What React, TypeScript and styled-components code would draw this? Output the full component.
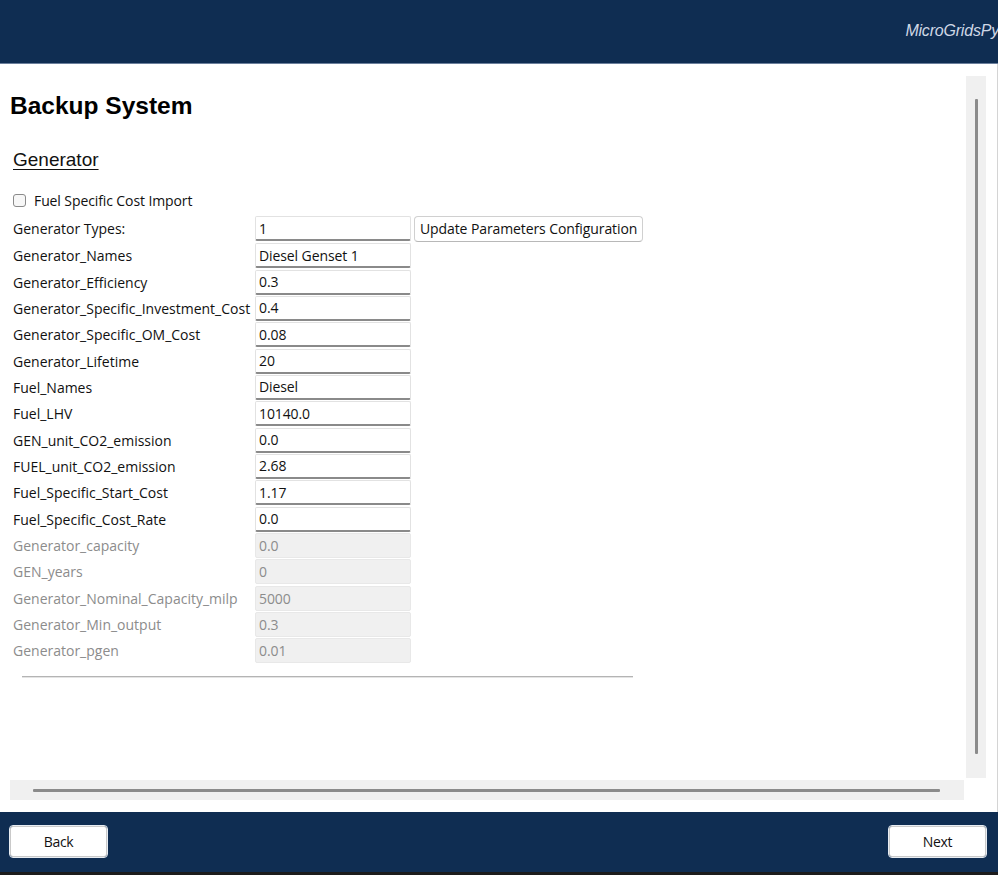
import React from 'react';
import styled, { createGlobalStyle } from 'styled-components';

const GlobalStyle = createGlobalStyle`
  html, body {
    margin: 0;
    padding: 0;
    background: #ffffff;
  }
  * {
    box-sizing: border-box;
  }
`;

const NAVY = '#0f2d52';
const UI_FONT = `"Open Sans", "Noto Sans", sans-serif`;

interface IField {
  label: string;
  value: string;
  disabled?: boolean;
}

const fields: IField[] = [
  { label: 'Generator_Names', value: 'Diesel Genset 1' },
  { label: 'Generator_Efficiency', value: '0.3' },
  { label: 'Generator_Specific_Investment_Cost', value: '0.4' },
  { label: 'Generator_Specific_OM_Cost', value: '0.08' },
  { label: 'Generator_Lifetime', value: '20' },
  { label: 'Fuel_Names', value: 'Diesel' },
  { label: 'Fuel_LHV', value: '10140.0' },
  { label: 'GEN_unit_CO2_emission', value: '0.0' },
  { label: 'FUEL_unit_CO2_emission', value: '2.68' },
  { label: 'Fuel_Specific_Start_Cost', value: '1.17' },
  { label: 'Fuel_Specific_Cost_Rate', value: '0.0' },
  { label: 'Generator_capacity', value: '0.0', disabled: true },
  { label: 'GEN_years', value: '0', disabled: true },
  { label: 'Generator_Nominal_Capacity_milp', value: '5000', disabled: true },
  { label: 'Generator_Min_output', value: '0.3', disabled: true },
  { label: 'Generator_pgen', value: '0.01', disabled: true },
];

const Frame = styled.div`
  width: 998px;
  height: 875px;
  display: flex;
  flex-direction: column;
  overflow: hidden;
`;

const Header = styled.header`
  height: 64px;
  background: ${NAVY};
  border-bottom: 1px solid #6b7f9c;
  display: flex;
  align-items: center;
  justify-content: flex-end;
`;

const Brand = styled.span`
  font-family: "Liberation Sans", Arial, sans-serif;
  font-style: italic;
  font-size: 16px;
  color: #cfd8e6;
  white-space: nowrap;
  margin-right: -1px;
  margin-top: -2px;
  letter-spacing: -0.2px;
`;

const Main = styled.main`
  flex: 1;
  background: #ffffff;
  border-right: 1px solid #d4d4d4;
  padding: 12px 11px 12px 10px;
  display: grid;
  grid-template-columns: 1fr 20px;
  grid-template-rows: 1fr 20px;
  gap: 2px;
  min-height: 0;
`;

const Viewport = styled.div`
  overflow: hidden;
  min-height: 0;
`;

const Track = styled.div<{ vertical?: boolean }>`
  background: #f0f0f0;
  display: flex;
  justify-content: center;
  align-items: center;
  padding: ${p => (p.vertical ? '23px 0 24px' : '0 24px 0 23px')};
`;

const Thumb = styled.div<{ vertical?: boolean }>`
  background: #8b8b8b;
  border-radius: 1px;
  width: ${p => (p.vertical ? '3px' : '100%')};
  height: ${p => (p.vertical ? '100%' : '3px')};
`;

const Title = styled.h1`
  margin: 16px 0 0;
  font-family: "Liberation Sans", Arial, sans-serif;
  font-weight: bold;
  font-size: 24.5px;
  line-height: 28px;
  color: #000000;
`;

const Section = styled.h2`
  margin: 29px 0 0 3px;
  font-family: "Liberation Sans", Arial, sans-serif;
  font-weight: normal;
  font-size: 19px;
  line-height: 22px;
  color: #111111;
  text-decoration: underline;
  text-underline-offset: 3px;
  text-decoration-thickness: 1px;
`;

const CheckRow = styled.label`
  margin: 21px 0 0 3px;
  height: 16px;
  display: flex;
  align-items: center;
  gap: 8px;
  font-family: ${UI_FONT};
  font-size: 14px;
  letter-spacing: -0.1px;
  color: #111111;
`;

const CheckBox = styled.span`
  width: 13px;
  height: 13px;
  border: 1px solid #8a8a8a;
  border-radius: 3px;
  background: #f7f7f7;
`;

const Form = styled.div`
  margin: 7px 0 0 3px;
  display: grid;
  grid-template-columns: 242px 156px auto;
  grid-auto-rows: 25px;
  grid-template-rows: 27px;
  row-gap: 1.33px;
  align-items: center;
  justify-items: start;
`;

const Label = styled.span<{ disabled?: boolean }>`
  grid-column: 1;
  font-family: ${UI_FONT};
  font-size: 14px;
  letter-spacing: 0;
  white-space: nowrap;
  color: ${p => (p.disabled ? '#8c8c8c' : '#111111')};
`;

const Field = styled.div<{ disabled?: boolean }>`
  grid-column: 2;
  width: 156px;
  height: 25px;
  display: flex;
  align-items: center;
  padding-left: 3px;
  font-family: ${UI_FONT};
  font-size: 14px;
  letter-spacing: -0.1px;
  border-radius: 2px;
  color: ${p => (p.disabled ? '#8c8c8c' : '#111111')};
  background: ${p => (p.disabled ? '#f0f0f0' : '#ffffff')};
  border: 1px solid ${p => (p.disabled ? '#e8e8e8' : '#e2e2e2')};
  border-bottom: ${p => (p.disabled ? '1px solid #e8e8e8' : '2px solid #8a8a8a')};
`;

const UpdateButton = styled.button`
  grid-column: 3;
  margin-left: 3px;
  height: 26px;
  padding: 0 5px;
  background: #ffffff;
  border: 1px solid #d0d0d0;
  border-bottom-color: #b8b8b8;
  border-radius: 4px;
  font-family: ${UI_FONT};
  font-size: 14px;
  letter-spacing: -0.1px;
  color: #111111;
  white-space: nowrap;
`;

const Divider = styled.hr`
  margin: 13px 0 0 12px;
  width: 611px;
  height: 2px;
  border: none;
  border-top: 1px solid #b4b4b4;
  border-bottom: 1px solid #e4e4e4;
`;

const Footer = styled.footer`
  height: 63px;
  background: ${NAVY};
  border-bottom: 3px solid #1c1c1c;
  display: flex;
  align-items: center;
  justify-content: space-between;
  padding: 0 12px 0 10px;
`;

const NavButton = styled.button`
  width: 97px;
  height: 31px;
  margin-top: -2px;
  background: #ffffff;
  border: 1px solid #c9c9c9;
  outline: 1px solid #e8edf3;
  border-radius: 3px;
  font-family: ${UI_FONT};
  font-size: 14px;
  letter-spacing: -0.3px;
  color: #111111;
`;

export default function App() {
  return (
    <Frame>
      <GlobalStyle />
      <Header>
        <Brand>MicroGridsPy</Brand>
      </Header>
      <Main>
        <Viewport>
          <Title>Backup System</Title>
          <Section>Generator</Section>
          <CheckRow>
            <CheckBox />
            Fuel Specific Cost Import
          </CheckRow>
          <Form>
            <Label>Generator Types:</Label>
            <Field>1</Field>
            <UpdateButton>Update Parameters Configuration</UpdateButton>
            {fields.map(f => (
              <React.Fragment key={f.label}>
                <Label disabled={f.disabled}>{f.label}</Label>
                <Field disabled={f.disabled}>{f.value}</Field>
              </React.Fragment>
            ))}
          </Form>
          <Divider />
        </Viewport>
        <Track vertical>
          <Thumb vertical />
        </Track>
        <Track>
          <Thumb />
        </Track>
      </Main>
      <Footer>
        <NavButton>Back</NavButton>
        <NavButton>Next</NavButton>
      </Footer>
    </Frame>
  );
}
